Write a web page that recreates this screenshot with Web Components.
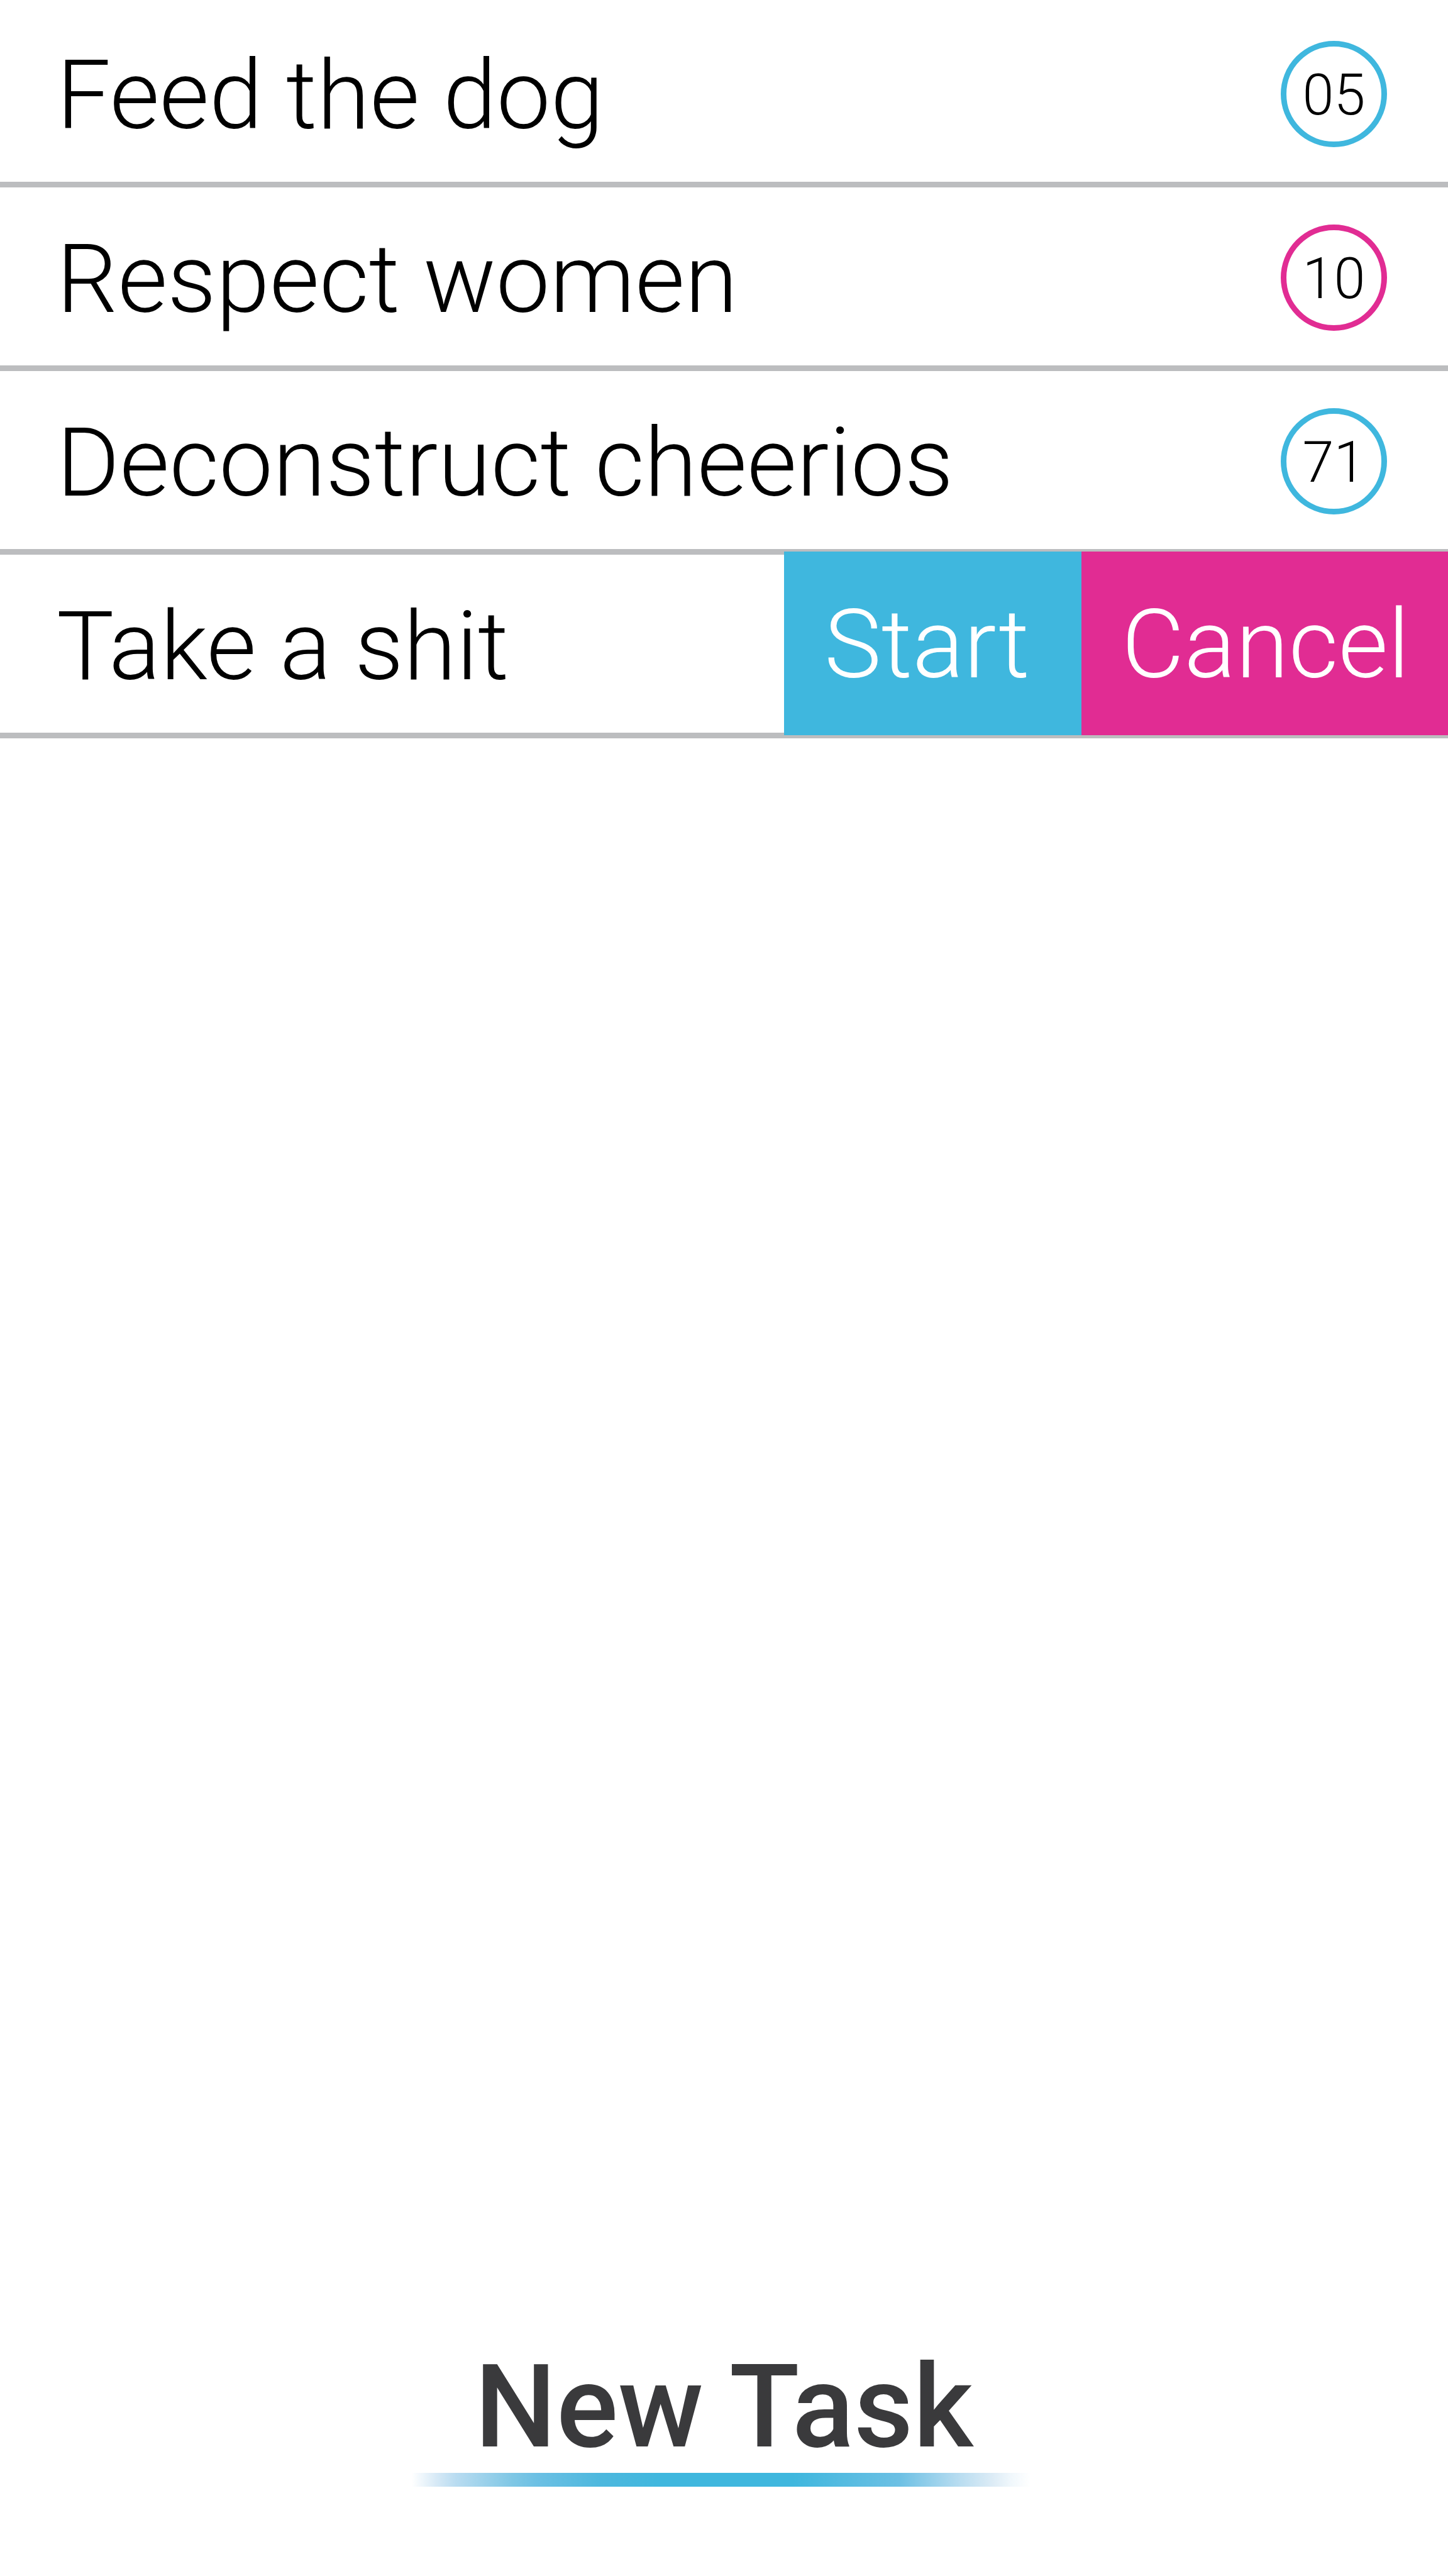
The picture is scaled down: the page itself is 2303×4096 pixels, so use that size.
<!DOCTYPE html>
<html lang="en">
<head>
<meta charset="utf-8">
<meta name="viewport" content="width=device-width, initial-scale=1">
<title>Tasks</title>
<style>
  body { margin: 0; background: #fff; }
</style>
</head>
<body>
<task-app>
  <task-row>Feed the dog<task-count slot="end" value="05"></task-count></task-row>
  <task-row>Respect women<task-count slot="end" value="10" tone="pink"></task-count></task-row>
  <task-row>Deconstruct cheerios<task-count slot="end" value="71"></task-count></task-row>
  <task-row>Take a shit<task-actions slot="end"></task-actions></task-row>
  <new-task slot="footer">New Task</new-task>
</task-app>

<script>
class Base extends HTMLElement {
  constructor() {
    super();
    this.attachShadow({ mode: 'open' }).innerHTML = this.constructor.markup;
  }
}

customElements.define('task-app', class extends Base {
  static markup = `
    <style>
      :host {
        --blue: #3fb7de;
        --pink: #e12c93;
        --rule: #bcbdbf;
        --ink: #3a3a3c;
        --text: 153px;
        display: flex;
        flex-direction: column;
        min-height: 100vh;
        font-family: Roboto, "Liberation Sans", sans-serif;
        font-weight: 300;
        color: #000;
      }
      main { flex: 1; padding-top: 6px; }
      footer { display: flex; justify-content: center; padding-bottom: 142px; }
    </style>
    <main role="list"><slot></slot></main>
    <footer><slot name="footer"></slot></footer>`;
});

customElements.define('task-row', class extends Base {
  static markup = `
    <style>
      :host {
        display: flex;
        align-items: center;
        justify-content: space-between;
        height: 283px;
        border-bottom: 9px solid var(--rule);
      }
      .label {
        padding: 8px 0 0 90px;
        font-size: var(--text);
        line-height: 180px;
        white-space: nowrap;
      }
    </style>
    <div class="label"><slot></slot></div>
    <slot name="end"></slot>`;
  connectedCallback() { this.setAttribute('role', 'listitem'); }
});

customElements.define('task-count', class extends Base {
  static markup = `
    <style>
      :host {
        display: flex;
        align-items: center;
        justify-content: center;
        box-sizing: border-box;
        width: 169px;
        height: 169px;
        margin: 4px 97px 0 0;
        padding-top: 4px;
        border: 9px solid var(--blue);
        border-radius: 50%;
        font-size: 90px;
        line-height: 100px;
      }
      :host([tone="pink"]) { border-color: var(--pink); }
    </style>
    <span></span>`;
  connectedCallback() {
    this.shadowRoot.querySelector('span').textContent = this.getAttribute('value');
  }
});

customElements.define('task-actions', class extends Base {
  static markup = `
    <style>
      :host { display: flex; align-self: stretch; margin: -5px 0 -4px; }
      button {
        margin: 0;
        padding: 4px 0 0 64px;
        border: 0;
        font: inherit;
        font-size: var(--text);
        line-height: 180px;
        text-align: left;
        color: #fff;
        cursor: pointer;
      }
      .start { width: 473px; background: var(--blue); }
      .cancel { width: 583px; background: var(--pink); }
    </style>
    <button class="start" type="button">Start</button>
    <button class="cancel" type="button">Cancel</button>`;
});

customElements.define('new-task', class extends Base {
  static markup = `
    <style>
      :host { display: block; }
      button {
        display: flex;
        flex-direction: column;
        align-items: center;
        gap: 12px;
        margin: 0;
        padding: 0;
        border: 0;
        background: none;
        font: inherit;
        font-weight: 500;
        font-size: 183px;
        line-height: 184px;
        color: var(--ink);
        cursor: pointer;
      }
      .bar {
        width: 994px;
        height: 22px;
        background: linear-gradient(to right,
          #fff, #d6e9f6 4%, #b9dcf1 7%, #7fc7e5 16%, #6cc0e4 20%, #4db8de 30%, var(--blue) 40%,
          var(--blue) 61%, #6cc0e4 78%, #b4dbf0 87%, #ddecf6 93%, #f1f8fc 96%, #fff 99%);
      }
    </style>
    <button type="button"><span><slot></slot></span><span class="bar"></span></button>`;
});
</script>
</body>
</html>
